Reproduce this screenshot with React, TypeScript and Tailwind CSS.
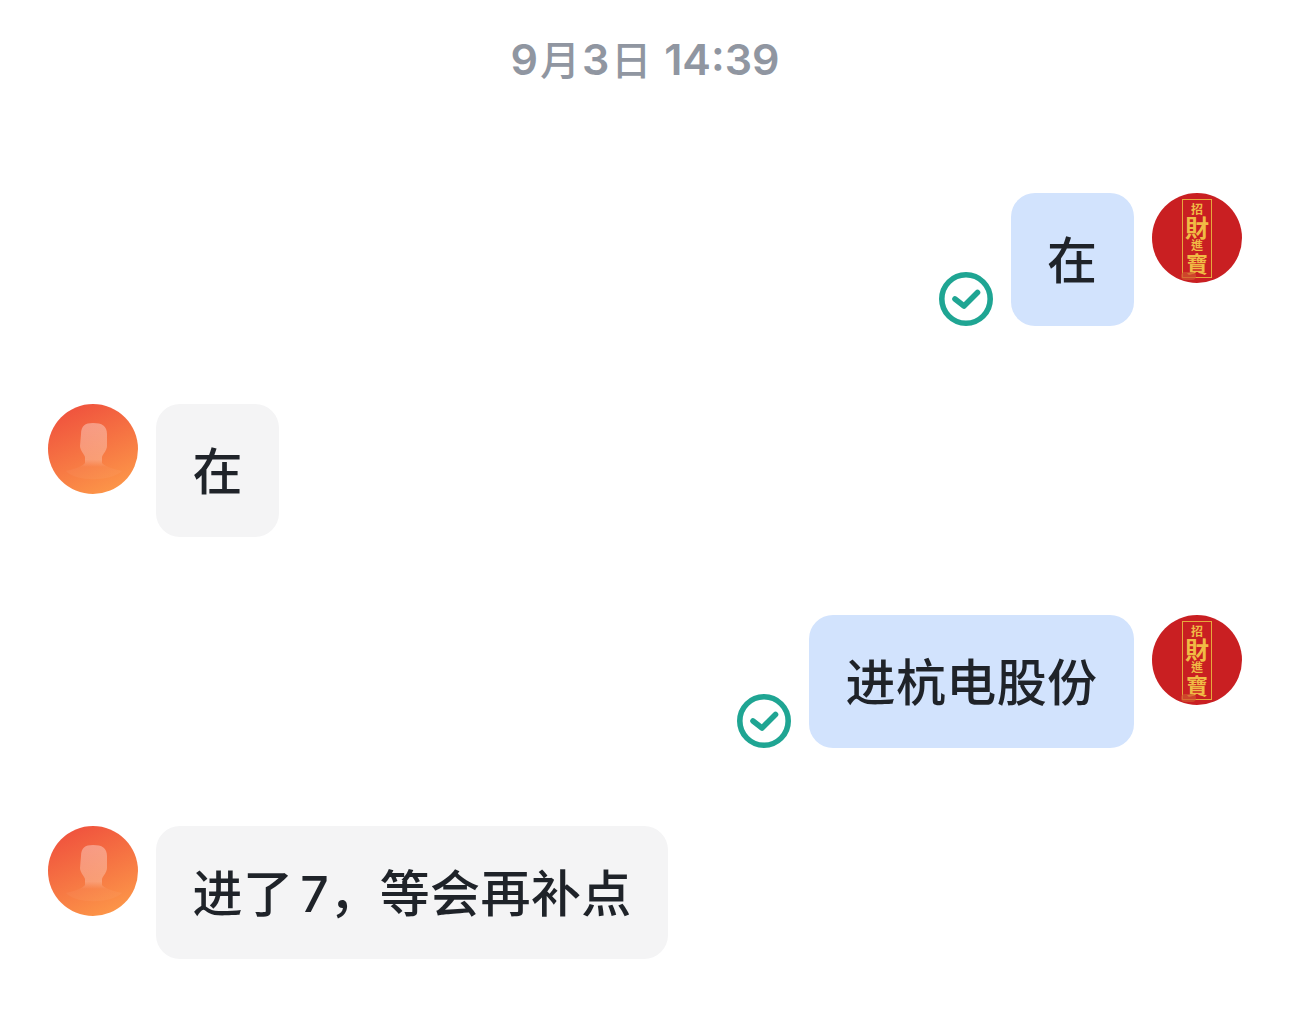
const font = { fontFamily: '"Inter", "Noto Sans CJK SC", sans-serif' };

function Check() {
  return (
    <svg width="54" height="54" viewBox="0 0 54 54" fill="none" className="shrink-0">
      <circle cx="27" cy="27" r="24.2" stroke="#1fa593" strokeWidth="5.6" />
      <path d="M16 27 L25 34 L38.5 20.5" stroke="#1fa593" strokeWidth="5.6" strokeLinecap="round" strokeLinejoin="round" />
    </svg>
  );
}

function RedAvatar() {
  return (
    <div className="relative w-[90px] h-[90px] rounded-full bg-[#c91f22] shrink-0 flex items-center justify-center overflow-hidden">
      <div className="w-[30px] h-[79px] border border-[#e6a83c] flex flex-col items-center justify-center text-[#f0bb45] font-['Noto_Sans_CJK_TC',serif] font-bold">
        <span className="text-[12px] leading-[12px]">招</span>
        <span className="text-[24px] leading-[24px]">財</span>
        <span className="text-[12px] leading-[12px]">進</span>
        <span className="text-[22px] leading-[22px]">寶</span>
      </div>
      <div className="absolute left-[29px] bottom-[3px] w-[15px] h-[8px] rounded-full bg-[#d0562f] opacity-70" />
    </div>
  );
}

function OrangeAvatar({ id }: { id: string }) {
  return (
    <div className="w-[90px] h-[90px] rounded-full bg-[linear-gradient(155deg,#ee4a3c,#fe9f4a)] shrink-0 overflow-hidden">
      <svg width="90" height="90" viewBox="0 0 90 90">
        <defs>
          <linearGradient id={id} x1="0" y1="0" x2="0" y2="1">
            <stop offset="0" stopColor="#ffffff" stopOpacity="0.36" />
            <stop offset="0.65" stopColor="#ffffff" stopOpacity="0.26" />
            <stop offset="0.78" stopColor="#ffffff" stopOpacity="0.04" />
          </linearGradient>
        </defs>
        <path d="M33 30 C33 22 37 19 45 19 C54 19 59 22 59 30 L59 42 C59 46 55 50 54 53 L54 59 C56 62 62 64 74 67 C62 78 28 78 18 67 C30 64 35 62 37 59 L37 53 C36 50 32 46 32 42 Z" fill={`url(#${id})`} />
      </svg>
    </div>
  );
}

function Mine({ text }: { text: string }) {
  return (
    <div className="flex justify-end items-start gap-[18px]">
      <div className="flex items-end gap-[18px]">
        <Check />
        <div className="h-[133px] px-[36.5px] pt-[3px] rounded-[24px] bg-[#d2e3fd] flex items-center text-[50px] tracking-[0.4px] font-medium text-[#1f2329]">{text}</div>
      </div>
      <RedAvatar />
    </div>
  );
}

function Theirs({ children, id }: { children: React.ReactNode; id: string }) {
  return (
    <div className="flex items-start gap-[18px]">
      <OrangeAvatar id={id} />
      <div className="h-[133px] px-[36.5px] pt-[3px] rounded-[24px] bg-[#f4f4f5] flex items-center text-[50px] tracking-[0.4px] font-medium text-[#1f2329]">{children}</div>
    </div>
  );
}

export default function App() {
  return (
    <div style={font} className="w-[1290px] h-[1031px] bg-white px-[48px] overflow-hidden">
      <div className="h-[193px] pt-[32px] text-center text-[43px] leading-[54px] font-semibold text-[#9096a1]">
        9<span className="mx-[2px] text-[40px] font-medium">月</span>3<span className="mx-[2px] text-[40px] font-medium">日</span> 14:39
      </div>
      <div className="flex flex-col gap-[78px]">
        <Mine text="在" />
        <Theirs id="a">在</Theirs>
        <Mine text="进杭电股份" />
        <Theirs id="b"><span>进了<span className="ml-[7px]">7</span>，等会再补点</span></Theirs>
      </div>
    </div>
  );
}
